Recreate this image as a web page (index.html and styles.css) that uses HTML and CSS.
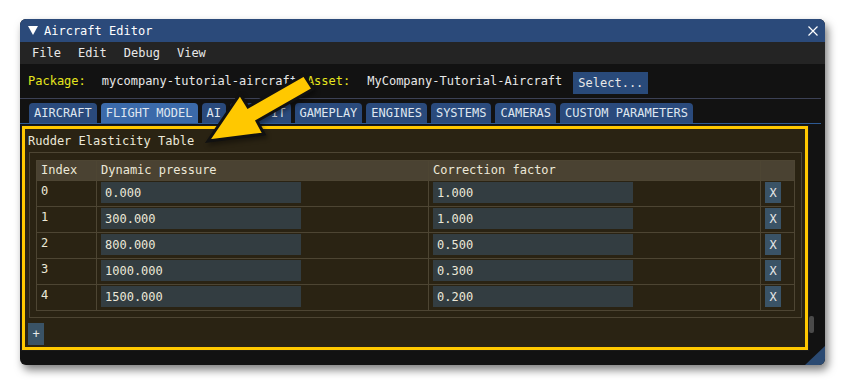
FILE: index.html
```html
<!DOCTYPE html>
<html lang="en">
<head>
    <meta charset="UTF-8">
    <title>Aircraft Editor</title>
    <link rel="stylesheet" href="styles.css">
</head>
<body>
    <div class="window">
        <div class="titlebar">
            <svg class="collapse" width="10" height="9" viewBox="0 0 10 9"><polygon points="0,0 10,0 5,9" fill="#fff"/></svg>
            <span class="title">Aircraft Editor</span>
            <svg class="close" width="10" height="10" viewBox="0 0 10 10"><path d="M0.5 0.5L9.5 9.5M9.5 0.5L0.5 9.5" stroke="#fff" stroke-width="1.2"/></svg>
        </div>
        <div class="menubar">
            <span>File</span>
            <span>Edit</span>
            <span>Debug</span>
            <span>View</span>
        </div>
        <div class="package-row">
            <span class="label">Package:</span>
            <span class="value pkg">mycompany-tutorial-aircraft</span>
            <span class="label">Asset:</span>
            <span class="value asset">MyCompany-Tutorial-Aircraft</span>
            <button class="select-btn">Select...</button>
        </div>
        <div class="separator"></div>
        <div class="tabs">
            <span class="tab">AIRCRAFT</span>
            <span class="tab active">FLIGHT MODEL</span>
            <span class="tab">AI</span>
            <span class="tab">COCKPIT</span>
            <span class="tab">GAMEPLAY</span>
            <span class="tab">ENGINES</span>
            <span class="tab">SYSTEMS</span>
            <span class="tab">CAMERAS</span>
            <span class="tab">CUSTOM PARAMETERS</span>
        </div>
        <div class="content">
            <div class="panel">
                <div class="panel-title">Rudder Elasticity Table</div>
                <div class="frame">
                    <table class="grid">
                        <thead>
                            <tr>
                                <th class="c-index">Index</th>
                                <th class="c-val">Dynamic pressure</th>
                                <th class="c-val">Correction factor</th>
                                <th class="c-del"></th>
                            </tr>
                        </thead>
                        <tbody>
                            <tr><td>0</td><td><div class="field">0.000</div></td><td><div class="field">1.000</div></td><td><button class="small-btn">X</button></td></tr>
                            <tr><td>1</td><td><div class="field">300.000</div></td><td><div class="field">1.000</div></td><td><button class="small-btn">X</button></td></tr>
                            <tr><td>2</td><td><div class="field">800.000</div></td><td><div class="field">0.500</div></td><td><button class="small-btn">X</button></td></tr>
                            <tr><td>3</td><td><div class="field">1000.000</div></td><td><div class="field">0.300</div></td><td><button class="small-btn">X</button></td></tr>
                            <tr><td>4</td><td><div class="field">1500.000</div></td><td><div class="field">0.200</div></td><td><button class="small-btn">X</button></td></tr>
                        </tbody>
                    </table>
                </div>
                <button class="small-btn add-btn">+</button>
            </div>
            <div class="scrollbar"><div class="thumb"></div></div>
        </div>
        <svg class="grip" width="30" height="19" viewBox="0 0 30 19"><polygon points="30,0 30,19 10,19" fill="#2b4a72"/></svg>
    </div>

    <!-- annotation arrow -->
    <svg class="arrow" width="845" height="387" viewBox="0 0 845 387">
        <polygon points="304,75 313,89 257,121 264,134 208,141 240,94 248,107" fill="#ffc800" stroke="#111" stroke-width="3" stroke-linejoin="miter"/>
    </svg>
</body>
</html>
```

FILE: styles.css
```css
body {
    margin: 0;
    padding: 19px 0 0 20px;
    background: #fff;
    font-family: "DejaVu Sans Mono", "Liberation Mono", monospace;
    font-size: 12px;
    width: 845px;
    height: 387px;
    box-sizing: border-box;
    position: relative;
    overflow: hidden;
}

.window {
    position: relative;
    width: 805px;
    height: 346px;
    background: #121212;
    border-radius: 6px;
    overflow: hidden;
    box-shadow: 3px 5px 8px rgba(0,0,0,0.5);
    color: #e8e8e8;
}

.titlebar {
    height: 23px;
    background: #2b4a7a;
    display: flex;
    align-items: center;
    padding: 0 7px 0 8px;
}

.collapse {
    margin-right: 6px;
}

.title {
    color: #fff;
    flex: 1;
}

.menubar {
    height: 22px;
    background: #242424;
    display: flex;
    align-items: center;
    padding-left: 12px;
}

.menubar span {
    margin-right: 17px;
}

.package-row {
    height: 34px;
    display: flex;
    align-items: center;
    padding-left: 8px;
}

.label {
    color: #e6e61e;
}

.pkg {
    margin-left: 16px;
    margin-right: 10px;
}

.asset {
    margin-left: 17px;
    margin-right: 11px;
}

.select-btn {
    font: inherit;
    color: #e8e8e8;
    background: #294a7a;
    border: none;
    height: 22px;
    padding: 0 5px;
    margin-top: 4px;
}

.separator {
    height: 1px;
    background: #3c4155;
    margin-right: 4px;
}

.tabs {
    display: flex;
    gap: 4px;
    padding: 4px 0 0 9px;
    border-bottom: 1px solid #2d5a94;
    margin-right: 4px;
}

.tab {
    height: 20px;
    line-height: 21px;
    padding: 0 5px;
    background: #2a4a7c;
    color: #dfe6f0;
    border-radius: 4px 4px 0 0;
}

.tab.active {
    background: #3b6aaa;
}

.content {
    display: flex;
    padding: 2px 0 0 2px;
}

.panel {
    width: 780px;
    height: 218px;
    background: #2a2313;
    border: 3px solid #ffc800;
    outline: 1px solid #1a1a1a;
    color: #ece8d8;
}

.panel-title {
    padding: 5px 0 0 3px;
    line-height: 14px;
}

.frame {
    margin: 4px 3px 0 4px;
    border: 1px solid #4d4533;
    padding: 7px 7px 6px 6px;
}

.grid {
    border-collapse: collapse;
    width: 758px;
    table-layout: fixed;
}

.grid th,
.grid td {
    border: 1px solid #4d4533;
    padding: 0 0 0 4px;
    text-align: left;
    font-weight: normal;
    vertical-align: top;
}

.grid th {
    background: #4a4232;
    height: 19px;
    line-height: 19px;
}

.grid td {
    height: 25px;
    line-height: 20px;
}

.c-index {
    width: 55px;
}

.c-val {
    width: 327px;
}

.c-del {
    width: 29px;
}

.field {
    width: 196px;
    height: 21px;
    line-height: 22px;
    margin-top: 1px;
    padding-left: 4px;
    background: #333d41;
}

.small-btn {
    font: inherit;
    color: #e8e8e8;
    background: #3a5366;
    border: none;
    width: 16px;
    height: 21px;
    padding: 0;
    margin-top: 1px;
    display: block;
}

.add-btn {
    margin: 5px 0 0 3px;
    height: 22px;
}

.scrollbar {
    width: 12px;
    position: relative;
}

.thumb {
    position: absolute;
    left: 1px;
    top: 190px;
    width: 5px;
    height: 17px;
    background: #4a4a4a;
    border-radius: 2px;
}

.grip {
    position: absolute;
    right: 0;
    bottom: 0;
}

.arrow {
    position: absolute;
    left: 0;
    top: 0;
    pointer-events: none;
    filter: drop-shadow(2px 3px 2px rgba(0,0,0,0.35));
}
```
